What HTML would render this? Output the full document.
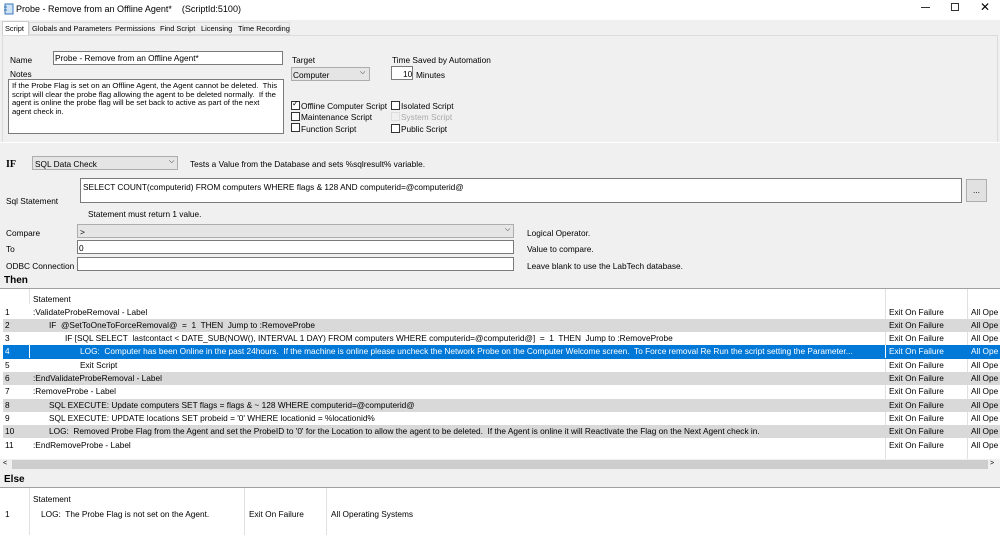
<!DOCTYPE html><html><head><style>
*{margin:0;padding:0;box-sizing:border-box}
body{width:1000px;height:535px;background:#f0f0f0;font-family:"Liberation Sans",sans-serif;font-size:8.3px;color:#000;position:relative;overflow:hidden}
.a{position:absolute;white-space:nowrap}
.in{position:absolute;background:#fff;border:1px solid #7a7a7a}
.sel{position:absolute;background:#e5e5e5;border:1px solid #adadad}
.cb{position:absolute;width:9px;height:9px;border:1px solid #333;background:#fff}
.row{position:absolute;left:3px;width:997px;height:13.3px;line-height:13.3px}
.row span{position:absolute}
.g{background:#d9d9d9}
.b{font-weight:bold}
.t{font-size:7.4px}
</style></head><body>
<div class="a" style="left:0;top:0;width:1000px;height:20px;background:#fff"></div>
<svg class="a" style="left:3px;top:3px" width="11" height="12"><rect x="2" y="1" width="8" height="10" fill="#cfe3f7" stroke="#3a76b8"/><path d="M1 4h3M1 7h3" stroke="#3a76b8"/></svg>
<div class="a" style="left:16px;top:4px;font-size:9px">Probe - Remove from an Offline Agent*&nbsp;&nbsp;&nbsp;&nbsp;(ScriptId:5100)</div>
<div class="a" style="left:921px;top:7px;width:9px;height:1px;background:#333"></div>
<div class="a" style="left:951px;top:3px;width:8px;height:8px;border:1px solid #333"></div>
<div class="a" style="left:980px;top:0px;font-size:12px">✕</div>
<div class="a" style="left:2px;top:21px;width:27px;height:15px;background:#fff;border:1px solid #ccc;border-bottom:none"></div>
<div class="a t" style="left:5px;top:24px">Script</div>
<div class="a" style="left:29px;top:22px;width:261px;height:13px;border:1px solid #ddd;background:#f0f0f0"></div>
<div class="a t" style="left:32px;top:24px">Globals and Parameters</div>
<div class="a t" style="left:115px;top:24px">Permissions</div>
<div class="a t" style="left:160px;top:24px">Find Script</div>
<div class="a t" style="left:201px;top:24px">Licensing</div>
<div class="a t" style="left:238px;top:24px">Time Recording</div>
<div class="a" style="left:2px;top:35px;width:996px;height:108px;border:1px solid #dcdcdc"></div>
<div class="a" style="left:10px;top:55px">Name</div>
<div class="in" style="left:53px;top:51px;width:230px;height:14px"></div>
<div class="a" style="left:55px;top:53px">Probe - Remove from an Offline Agent*</div>
<div class="a" style="left:10px;top:69px">Notes</div>
<div class="in" style="left:8px;top:79px;width:276px;height:55px"></div>
<div class="a" style="left:12px;top:82px;line-height:8.7px;font-size:7.7px">If the Probe Flag is set on an Offline Agent, the Agent cannot be deleted.&nbsp; This<br>script will clear the probe flag allowing the agent to be deleted normally.&nbsp; If the<br>agent is online the probe flag will be set back to active as part of the next<br>agent check in.</div>
<div class="a" style="left:292px;top:55px">Target</div>
<div class="sel" style="left:291px;top:67px;width:79px;height:14px"></div>
<div class="a" style="left:293px;top:70px">Computer</div><div class="a" style="left:360px;top:69px;font-size:7px">⌵</div>
<div class="a" style="left:392px;top:55px">Time Saved by Automation</div>
<div class="in" style="left:391px;top:66px;width:22px;height:14px"></div>
<div class="a" style="left:403px;top:69px">10</div>
<div class="a" style="left:416px;top:70px">Minutes</div>
<div class="cb" style="left:291px;top:101px"></div><div class="a" style="left:292px;top:99px;font-size:8px">✓</div>
<div class="a" style="left:301px;top:101px">Offline Computer Script</div>
<div class="cb" style="left:291px;top:112px"></div><div class="a" style="left:301px;top:112px">Maintenance Script</div>
<div class="cb" style="left:291px;top:123px"></div><div class="a" style="left:301px;top:124px">Function Script</div>
<div class="cb" style="left:391px;top:101px"></div><div class="a" style="left:401px;top:101px">Isolated Script</div>
<div class="cb" style="left:391px;top:112px;border-color:#ddd;background:#f0f0f0"></div><div class="a" style="left:401px;top:112px;color:#aaa">System Script</div>
<div class="cb" style="left:391px;top:124px"></div><div class="a" style="left:401px;top:124px">Public Script</div>
<div class="a" style="left:0;top:142px;width:1000px;height:1px;background:#fff"></div>
<div class="a b" style="left:6px;top:159px;font-size:10px;font-family:'Liberation Serif',serif">IF</div>
<div class="sel" style="left:32px;top:156px;width:146px;height:14px"></div>
<div class="a" style="left:35px;top:159px">SQL Data Check</div><div class="a" style="left:169px;top:158px;font-size:7px">⌵</div>
<div class="a" style="left:190px;top:159px">Tests a Value from the Database and sets %sqlresult% variable.</div>
<div class="a" style="left:6px;top:196px">Sql Statement</div>
<div class="in" style="left:80px;top:178px;width:882px;height:25px"></div>
<div class="a" style="left:83px;top:182px">SELECT COUNT(computerid) FROM computers WHERE flags &amp; 128 AND computerid=@computerid@</div>
<div class="a" style="left:966px;top:179px;width:21px;height:23px;border:1px solid #adadad;background:#e1e1e1;text-align:center;line-height:20px">...</div>
<div class="a" style="left:88px;top:209px">Statement must return 1 value.</div>
<div class="a" style="left:6px;top:228px">Compare</div>
<div class="sel" style="left:77px;top:224px;width:437px;height:14px"></div>
<div class="a" style="left:80px;top:227px">&gt;</div><div class="a" style="left:505px;top:226px;font-size:7px">⌵</div>
<div class="a" style="left:527px;top:228px">Logical Operator.</div>
<div class="a" style="left:6px;top:244px">To</div>
<div class="in" style="left:77px;top:240px;width:437px;height:14px"></div>
<div class="a" style="left:79px;top:243px">0</div>
<div class="a" style="left:527px;top:244px">Value to compare.</div>
<div class="a" style="left:6px;top:261px">ODBC Connection</div>
<div class="in" style="left:77px;top:257px;width:437px;height:14px"></div>
<div class="a" style="left:527px;top:261px">Leave blank to use the LabTech database.</div>
<div class="a b" style="left:4px;top:275px;font-size:10px">Then</div>
<div class="a" style="left:0;top:288px;width:1000px;height:172px;background:#fff;border-top:1px solid #a0a0a0"></div>
<div class="a" style="left:29px;top:289px;width:1px;height:15px;background:#e0e0e0"></div>
<div class="a" style="left:885px;top:289px;width:1px;height:170px;background:#e0e0e0"></div>
<div class="a" style="left:967px;top:289px;width:1px;height:170px;background:#e0e0e0"></div>
<div class="a" style="left:33px;top:294px">Statement</div>
<div class="row" style="top:305.5px"><span style="left:2px">1</span><span style="left:30px">:ValidateProbeRemoval - Label</span><span style="left:886px">Exit On Failure</span><span style="left:968px">All Ope</span></div>
<div class="row g" style="top:318.8px"><span style="left:2px">2</span><span style="left:46px">IF&nbsp; @SetToOneToForceRemoval@&nbsp; =&nbsp; 1&nbsp; THEN&nbsp; Jump to :RemoveProbe</span><span style="left:886px">Exit On Failure</span><span style="left:968px">All Ope</span></div>
<div class="row" style="top:332.1px"><span style="left:2px">3</span><span style="left:62px">IF [SQL SELECT&nbsp; lastcontact &lt; DATE_SUB(NOW(), INTERVAL 1 DAY) FROM computers WHERE computerid=@computerid@]&nbsp; =&nbsp; 1&nbsp; THEN&nbsp; Jump to :RemoveProbe</span><span style="left:886px">Exit On Failure</span><span style="left:968px">All Ope</span></div>
<div class="row" style="top:345.4px;background:#0078d7;color:#fff;overflow:hidden"><span style="left:2px">4</span><span style="left:26px;width:1px;height:13px;background:#fff"></span><span style="left:77px;width:804px;overflow:hidden">LOG:&nbsp; Computer has been Online in the past 24hours.&nbsp; If the machine is online please uncheck the Network Probe on the Computer Welcome screen.&nbsp; To Force removal Re Run the script setting the Parameter...</span><span style="left:882px;width:1px;height:13px;background:#fff"></span><span style="left:886px">Exit On Failure</span><span style="left:968px">All Ope</span></div>
<div class="row" style="top:358.7px"><span style="left:2px">5</span><span style="left:77px">Exit Script</span><span style="left:886px">Exit On Failure</span><span style="left:968px">All Ope</span></div>
<div class="row g" style="top:372px"><span style="left:2px">6</span><span style="left:30px">:EndValidateProbeRemoval - Label</span><span style="left:886px">Exit On Failure</span><span style="left:968px">All Ope</span></div>
<div class="row" style="top:385.3px"><span style="left:2px">7</span><span style="left:30px">:RemoveProbe - Label</span><span style="left:886px">Exit On Failure</span><span style="left:968px">All Ope</span></div>
<div class="row g" style="top:398.6px"><span style="left:2px">8</span><span style="left:46px">SQL EXECUTE: Update computers SET flags = flags &amp; ~ 128 WHERE computerid=@computerid@</span><span style="left:886px">Exit On Failure</span><span style="left:968px">All Ope</span></div>
<div class="row" style="top:411.9px"><span style="left:2px">9</span><span style="left:46px">SQL EXECUTE: UPDATE locations SET probeid = '0' WHERE locationid = %locationid%</span><span style="left:886px">Exit On Failure</span><span style="left:968px">All Ope</span></div>
<div class="row g" style="top:425.2px"><span style="left:2px">10</span><span style="left:46px">LOG:&nbsp; Removed Probe Flag from the Agent and set the ProbeID to '0' for the Location to allow the agent to be deleted.&nbsp; If the Agent is online it will Reactivate the Flag on the Next Agent check in.</span><span style="left:886px">Exit On Failure</span><span style="left:968px">All Ope</span></div>
<div class="row" style="top:438.5px"><span style="left:2px">11</span><span style="left:30px">:EndRemoveProbe - Label</span><span style="left:886px">Exit On Failure</span><span style="left:968px">All Ope</span></div>
<div class="a" style="left:0;top:459px;width:1000px;height:11px;background:#f0f0f0"></div>
<div class="a" style="left:12px;top:460px;width:976px;height:9px;background:#cdcdcd"></div>
<div class="a" style="left:3px;top:460px;font-size:7px">&lt;</div><div class="a" style="left:990px;top:460px;font-size:7px">&gt;</div>
<div class="a b" style="left:4px;top:474px;font-size:10px">Else</div>
<div class="a" style="left:0;top:487px;width:1000px;height:48px;background:#fff;border-top:1px solid #a0a0a0"></div>
<div class="a" style="left:29px;top:488px;width:1px;height:47px;background:#e0e0e0"></div>
<div class="a" style="left:244px;top:488px;width:1px;height:47px;background:#e0e0e0"></div>
<div class="a" style="left:326px;top:488px;width:1px;height:47px;background:#e0e0e0"></div>
<div class="a" style="left:33px;top:494px">Statement</div>
<div class="a" style="left:5px;top:509px">1</div>
<div class="a" style="left:41px;top:509px">LOG:&nbsp; The Probe Flag is not set on the Agent.</div>
<div class="a" style="left:249px;top:509px">Exit On Failure</div>
<div class="a" style="left:331px;top:509px">All Operating Systems</div>
</body></html>
